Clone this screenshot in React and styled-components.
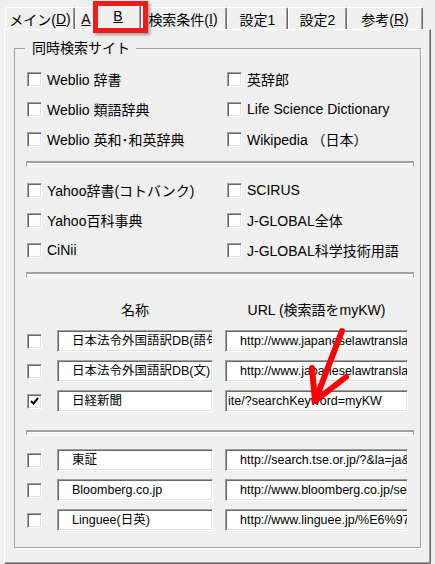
import React from 'react';
import styled, { createGlobalStyle } from 'styled-components';

const GlobalStyle = createGlobalStyle`
  html, body {
    margin: 0;
    padding: 0;
    background: #f0f0f0;
  }
  body {
    font-family: "Liberation Sans", "Noto Sans CJK JP", sans-serif;
  }
`;

const Window = styled.div`
  position: relative;
  width: 435px;
  height: 564px;
  overflow: hidden;
  box-sizing: border-box;
  padding: 7px 4px 0 4px;
  background: #f0f0f0;
  color: #000;
  font-size: 14px;
`;

const TabStrip = styled.div`
  display: flex;
  align-items: flex-end;
  height: 22px;
  padding-left: 1px;
  position: relative;
  z-index: 1;
`;

const Tab = styled.div`
  box-sizing: border-box;
  flex: none;
  width: ${(p) => p.$w}px;
  height: ${(p) => (p.$active ? 26 : 22)}px;
  margin: 0 ${(p) => (p.$active ? -2 : 0)}px ${(p) => (p.$active ? -1 : 0)}px;
  padding-bottom: ${(p) => (p.$active ? 4 : 0)}px;
  display: flex;
  align-items: center;
  justify-content: center;
  border-top: 1px solid #fff;
  border-left: 1px solid #fff;
  border-right: 1px solid #696969;
  border-radius: 2px 2px 0 0;
  box-shadow: inset -1px 0 0 #a0a0a0;
  background: #f0f0f0;
  white-space: nowrap;
  position: relative;
  z-index: ${(p) => (p.$active ? 2 : 1)};
`;

const Panel = styled.div`
  box-sizing: border-box;
  height: 535px;
  border-top: 1px solid #fff;
  border-left: 1px solid #fff;
  border-right: 1px solid #696969;
  border-bottom: 1px solid #696969;
  box-shadow: inset -1px -1px 0 #a0a0a0;
  padding: 10px 9px 0 9px;
`;

const GroupBox = styled.fieldset`
  margin: 0;
  min-width: 0;
  padding: 8px 6px 12px 12px;
  border: 1px solid #a0a0a0;
  box-shadow: 1px 1px 0 #fff;
`;

const Caption = styled.legend`
  margin-left: -2px;
  padding: 0 6px 0 7px;
  font-size: 14px;
  line-height: 16px;
`;

const CheckGrid = styled.div`
  display: grid;
  grid-template-columns: 200px 1fr;
  grid-auto-rows: 30px;
  align-items: center;
`;

const CheckLabel = styled.label`
  display: flex;
  align-items: center;
  gap: 5px;
  white-space: nowrap;
  font-size: 14px;
`;

const Box = styled.span`
  box-sizing: border-box;
  flex: none;
  width: 15px;
  height: 15px;
  display: flex;
  align-items: center;
  justify-content: center;
  background: #fff;
  border-top: 1px solid #a0a0a0;
  border-left: 1px solid #a0a0a0;
  border-right: 1px solid #fff;
  border-bottom: 1px solid #fff;
  box-shadow: inset 1px 1px 0 #696969, inset -1px -1px 0 #e3e3e3;
`;

const Groove = styled.div`
  box-sizing: border-box;
  height: 6px;
  margin: ${(p) => p.$mt}px 0 ${(p) => p.$mb}px -1px;
  border-style: solid;
  border-width: 2px 1px 1px 1px;
  border-color: #a0a0a0 #a0a0a0 #fff #a0a0a0;
  box-shadow: inset 0 1px 0 #fff;
`;

const EntryGrid = styled.div`
  display: grid;
  grid-template-columns: 18px 156px 183px;
  column-gap: 12px;
  grid-auto-rows: ${(p) => p.$row || 30}px;
  align-items: center;
  margin-bottom: ${(p) => p.$mb || 0}px;
`;

const ColHead = styled.div`
  text-align: center;
  white-space: nowrap;
  font-size: 14px;
`;

const Field = styled.div`
  box-sizing: border-box;
  height: 22px;
  background: #fff;
  border-top: 1px solid #a0a0a0;
  border-left: 1px solid #a0a0a0;
  border-right: 1px solid #fff;
  border-bottom: 1px solid #fff;
  box-shadow: inset 1px 1px 0 #696969, inset -1px -1px 0 #e3e3e3;
  padding-left: ${(p) => (p.$pad != null ? p.$pad : 14)}px;
  font-size: 12.5px;
  line-height: 20px;
  white-space: nowrap;
  overflow: hidden;
`;

const RedFrame = styled.div`
  position: absolute;
  left: 93px;
  top: 1px;
  width: 55px;
  height: 32px;
  box-sizing: border-box;
  border: 5px solid #ee1c1c;
  box-shadow: 2px 2px 3px rgba(0, 0, 0, 0.35);
  z-index: 5;
`;

const Arrow = styled.svg`
  position: absolute;
  left: 290px;
  top: 320px;
  z-index: 5;
`;

const Check = () => (
  <svg width="9" height="8" viewBox="0 0 9 8">
    <polyline points="1,4 3.5,6.5 8,1" fill="none" stroke="#000" strokeWidth="2" />
  </svg>
);

const CheckBox = ({ checked }) => <Box>{checked && <Check />}</Box>;

const sitesA = [
  'Weblio 辞書', '英辞郎',
  'Weblio 類語辞典', 'Life Science Dictionary',
  'Weblio 英和･和英辞典', 'Wikipedia （日本）',
];

const sitesB = [
  'Yahoo辞書(コトバンク)', 'SCIRUS',
  'Yahoo百科事典', 'J-GLOBAL全体',
  'CiNii', 'J-GLOBAL科学技術用語',
];

const customA = [
  { name: '日本法令外国語訳DB(語句)', url: 'http://www.japaneselawtranslation.go.jp/dict/' },
  { name: '日本法令外国語訳DB(文)', url: 'http://www.japaneselawtranslation.go.jp/law/' },
  { name: '日経新聞', url: 'ite/?searchKeyword=myKW', checked: true, pad: 2 },
];

const customB = [
  { name: '東証', url: 'http://search.tse.or.jp/?&la=ja&q=myKW' },
  { name: 'Bloomberg.co.jp', url: 'http://www.bloomberg.co.jp/search/?q=myKW' },
  { name: 'Linguee(日英)', url: 'http://www.linguee.jp/%E6%97%A5' },
];

const tabs = [
  { w: 70, label: <>メイン(<u>D</u>)</> },
  { w: 22, label: <u>A</u> },
  { w: 46, label: <u>B</u>, active: true },
  { w: 88, label: <>検索条件(<u>I</u>)</> },
  { w: 61, label: '設定1' },
  { w: 59, label: '設定2' },
  { w: 76, label: <>参考(<u>R</u>)</> },
];

const Entries = ({ rows }) => (
  <EntryGrid>
    {rows.map((r) => (
      <React.Fragment key={r.name}>
        <CheckBox checked={r.checked} />
        <Field>{r.name}</Field>
        <Field $pad={r.pad}>{r.url}</Field>
      </React.Fragment>
    ))}
  </EntryGrid>
);

const Sites = ({ items }) => (
  <CheckGrid>
    {items.map((s) => (
      <CheckLabel key={s}>
        <CheckBox />
        {s}
      </CheckLabel>
    ))}
  </CheckGrid>
);

export default function App() {
  return (
    <Window>
      <GlobalStyle />
      <TabStrip>
        {tabs.map((t, i) => (
          <Tab key={i} $w={t.w} $active={t.active}>
            {t.label}
          </Tab>
        ))}
      </TabStrip>
      <Panel>
        <GroupBox>
          <Caption>同時検索サイト</Caption>
          <Sites items={sitesA} />
          <Groove $mt={7} $mb={8} />
          <Sites items={sitesB} />
          <Groove $mt={7} $mb={21} />
          <EntryGrid $row={20} $mb={7}>
            <span />
            <ColHead>名称</ColHead>
            <ColHead>URL (検索語をmyKW)</ColHead>
          </EntryGrid>
          <Entries rows={customA} />
          <Groove $mt={14} $mb={9} />
          <Entries rows={customB} />
        </GroupBox>
      </Panel>

      <RedFrame />
      <Arrow width="70" height="95" viewBox="0 0 70 95">
        <g fill="none" stroke="#f00" strokeWidth="6" strokeLinecap="round" strokeLinejoin="round">
          <line x1="52" y1="11" x2="25" y2="81" />
          <polyline points="22,48 25,81 56,57" />
        </g>
      </Arrow>
    </Window>
  );
}
